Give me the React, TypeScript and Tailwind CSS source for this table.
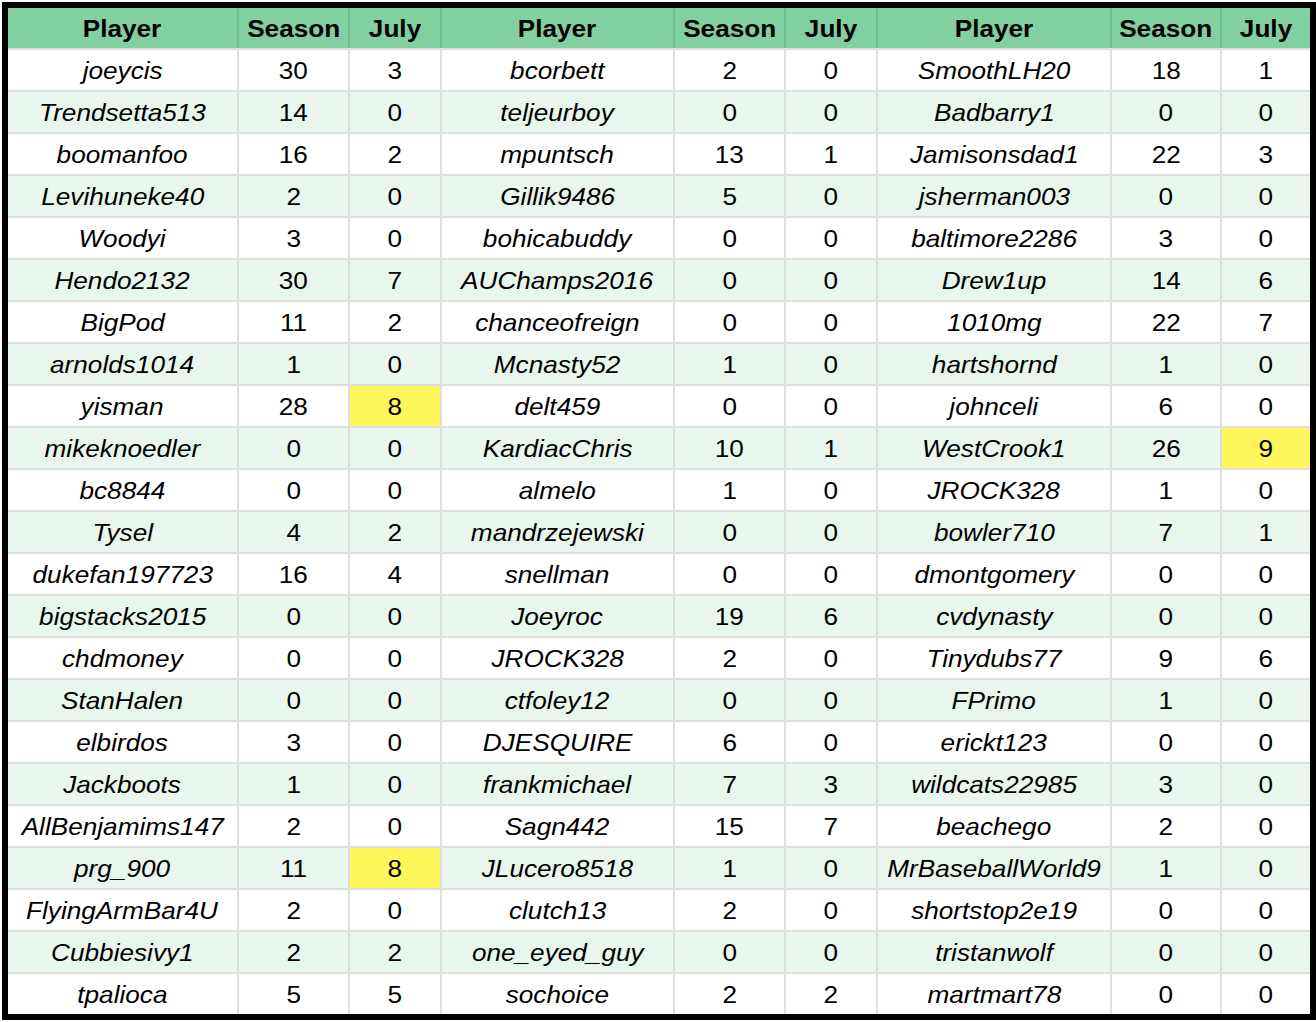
import React from "react";

type Entry = [string, number, number];

const rows: Entry[][] = [
  [["joeycis", 30, 3], ["bcorbett", 2, 0], ["SmoothLH20", 18, 1]],
  [["Trendsetta513", 14, 0], ["teljeurboy", 0, 0], ["Badbarry1", 0, 0]],
  [["boomanfoo", 16, 2], ["mpuntsch", 13, 1], ["Jamisonsdad1", 22, 3]],
  [["Levihuneke40", 2, 0], ["Gillik9486", 5, 0], ["jsherman003", 0, 0]],
  [["Woodyi", 3, 0], ["bohicabuddy", 0, 0], ["baltimore2286", 3, 0]],
  [["Hendo2132", 30, 7], ["AUChamps2016", 0, 0], ["Drew1up", 14, 6]],
  [["BigPod", 11, 2], ["chanceofreign", 0, 0], ["1010mg", 22, 7]],
  [["arnolds1014", 1, 0], ["Mcnasty52", 1, 0], ["hartshornd", 1, 0]],
  [["yisman", 28, 8], ["delt459", 0, 0], ["johnceli", 6, 0]],
  [["mikeknoedler", 0, 0], ["KardiacChris", 10, 1], ["WestCrook1", 26, 9]],
  [["bc8844", 0, 0], ["almelo", 1, 0], ["JROCK328", 1, 0]],
  [["Tysel", 4, 2], ["mandrzejewski", 0, 0], ["bowler710", 7, 1]],
  [["dukefan197723", 16, 4], ["snellman", 0, 0], ["dmontgomery", 0, 0]],
  [["bigstacks2015", 0, 0], ["Joeyroc", 19, 6], ["cvdynasty", 0, 0]],
  [["chdmoney", 0, 0], ["JROCK328", 2, 0], ["Tinydubs77", 9, 6]],
  [["StanHalen", 0, 0], ["ctfoley12", 0, 0], ["FPrimo", 1, 0]],
  [["elbirdos", 3, 0], ["DJESQUIRE", 6, 0], ["erickt123", 0, 0]],
  [["Jackboots", 1, 0], ["frankmichael", 7, 3], ["wildcats22985", 3, 0]],
  [["AllBenjamims147", 2, 0], ["Sagn442", 15, 7], ["beachego", 2, 0]],
  [["prg_900", 11, 8], ["JLucero8518", 1, 0], ["MrBaseballWorld9", 1, 0]],
  [["FlyingArmBar4U", 2, 0], ["clutch13", 2, 0], ["shortstop2e19", 0, 0]],
  [["Cubbiesivy1", 2, 2], ["one_eyed_guy", 0, 0], ["tristanwolf", 0, 0]],
  [["tpalioca", 5, 5], ["sochoice", 2, 2], ["martmart78", 0, 0]],
];

// july cells that got the yellow fill, keyed "row-group"
const highlighted = new Set(["8-0", "19-0", "9-2"]);

const cols =
  "grid grid-cols-[229px_109px_90px_231px_109px_90px_232px_108px_88px] gap-x-[2px]";

function Cell({ className, children }: { className: string; children: React.ReactNode }) {
  return (
    <div className={`flex items-center justify-center ${className}`}>
      <span className="inline-block scale-x-[1.09] whitespace-nowrap">{children}</span>
    </div>
  );
}

export default function App() {
  return (
    <div className="min-h-screen bg-white pl-[2px] pt-[2px] font-['Liberation_Sans',Arial,sans-serif] text-[24px] leading-none text-black">
      <div className="w-[1314px] border-[6px] border-black">
        <div className={`${cols} h-[40px] bg-[#6fbf8e]`}>
          {[0, 1, 2].map((g) => (
            <React.Fragment key={g}>
              <Cell className="bg-[#82cf9f] pt-[1px] font-bold">Player</Cell>
              <Cell className="bg-[#82cf9f] pt-[1px] font-bold">Season</Cell>
              <Cell className="bg-[#82cf9f] pt-[1px] font-bold">July</Cell>
            </React.Fragment>
          ))}
        </div>

        <div className={`${cols} auto-rows-[40px] gap-y-[2px] bg-[#dedede] pt-[2px]`}>
          {rows.map((row, i) => {
            const bg = i % 2 === 0 ? "bg-white" : "bg-[#e9f6ee]";
            return row.map(([name, season, july], g) => (
              <React.Fragment key={`${i}-${g}`}>
                <Cell className={`pt-[2px] italic ${bg}`}>{name}</Cell>
                <Cell className={`pt-[2px] ${bg}`}>{season}</Cell>
                <Cell
                  className={`pt-[2px] ${
                    highlighted.has(`${i}-${g}`) ? "bg-[#fdf65c]" : bg
                  }`}
                >
                  {july}
                </Cell>
              </React.Fragment>
            ));
          })}
        </div>
      </div>
    </div>
  );
}
